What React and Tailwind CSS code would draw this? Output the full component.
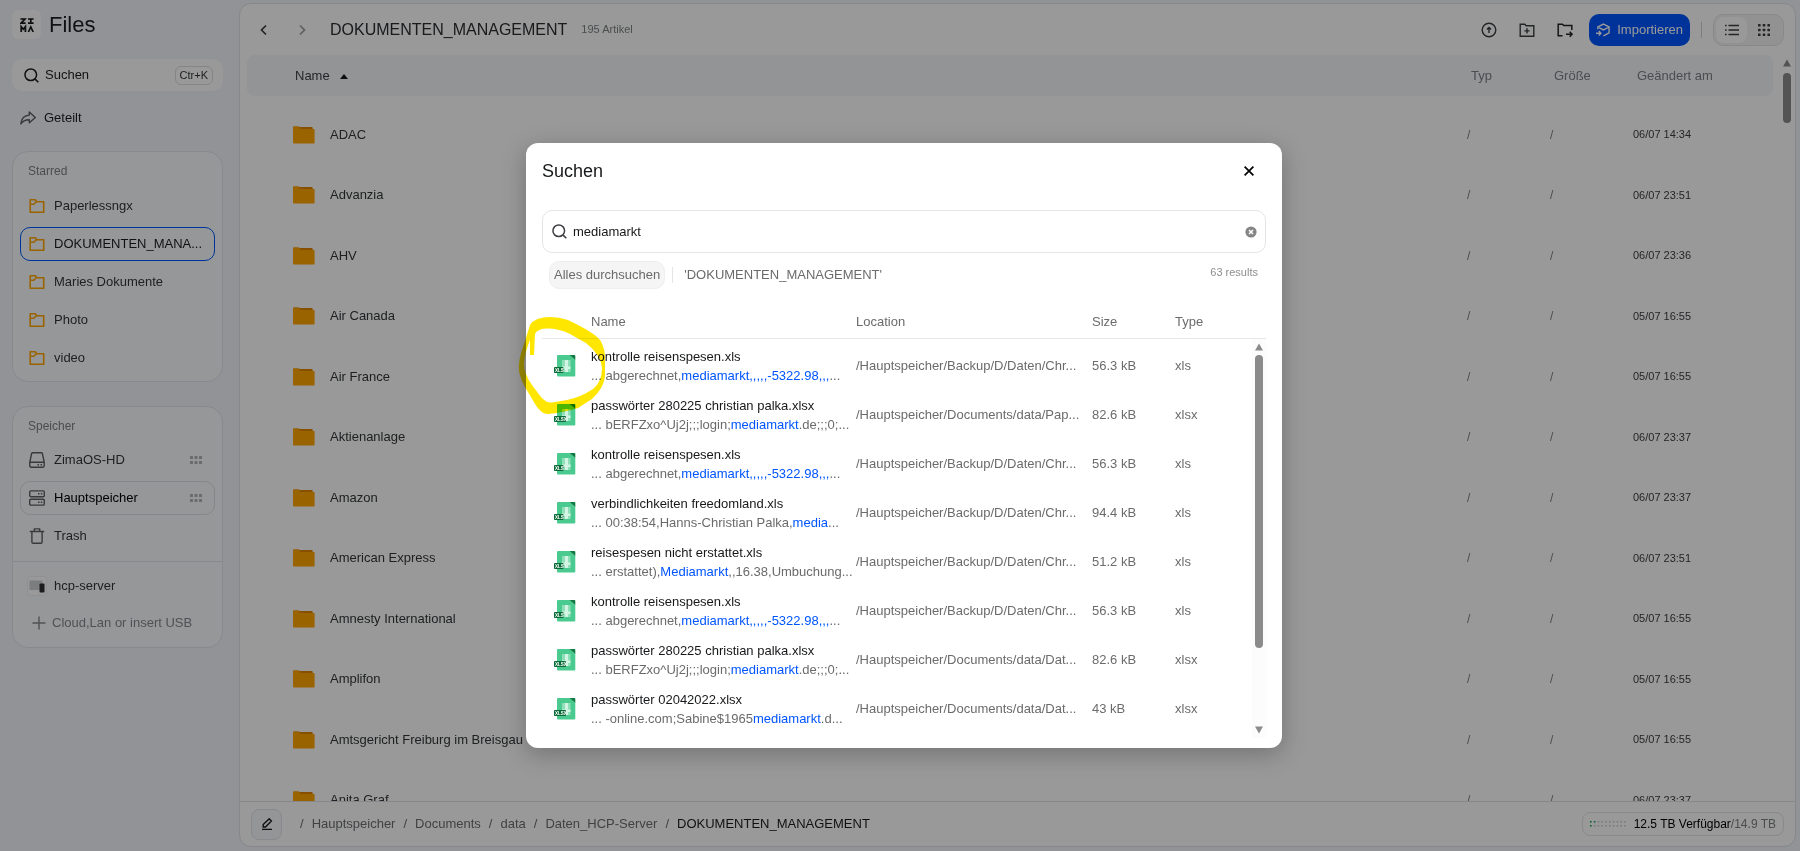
const FOLDERS = [
  ["ADAC", "06/07 14:34"],
  ["Advanzia", "06/07 23:51"],
  ["AHV", "06/07 23:36"],
  ["Air Canada", "05/07 16:55"],
  ["Air France", "05/07 16:55"],
  ["Aktienanlage", "06/07 23:37"],
  ["Amazon", "06/07 23:37"],
  ["American Express", "06/07 23:51"],
  ["Amnesty International", "05/07 16:55"],
  ["Amplifon", "05/07 16:55"],
  ["Amtsgericht Freiburg im Breisgau", "05/07 16:55"],
  ["Anita Graf", "06/07 23:37"],
];

const BACKUP = "/Hauptspeicher/Backup/D/Daten/Chr...";
const RESULTS = [
  { name: "kontrolle reisenspesen.xls", pre: "... abgerechnet,", hit: "mediamarkt,,,,,-5322.98,,,", post: "...", loc: BACKUP, size: "56.3 kB", type: "xls" },
  { name: "passwörter 280225 christian palka.xlsx", pre: "... bERFZxo^Uj2j;;;login;", hit: "mediamarkt", post: ".de;;;0;...", loc: "/Hauptspeicher/Documents/data/Pap...", size: "82.6 kB", type: "xlsx" },
  { name: "kontrolle reisenspesen.xls", pre: "... abgerechnet,", hit: "mediamarkt,,,,,-5322.98,,,", post: "...", loc: BACKUP, size: "56.3 kB", type: "xls" },
  { name: "verbindlichkeiten freedomland.xls", pre: "... 00:38:54,Hanns-Christian Palka,", hit: "media", post: "...", loc: BACKUP, size: "94.4 kB", type: "xls" },
  { name: "reisespesen nicht erstattet.xls", pre: "... erstattet),", hit: "Mediamarkt", post: ",,16.38,Umbuchung...", loc: BACKUP, size: "51.2 kB", type: "xls" },
  { name: "kontrolle reisenspesen.xls", pre: "... abgerechnet,", hit: "mediamarkt,,,,,-5322.98,,,", post: "...", loc: BACKUP, size: "56.3 kB", type: "xls" },
  { name: "passwörter 280225 christian palka.xlsx", pre: "... bERFZxo^Uj2j;;;login;", hit: "mediamarkt", post: ".de;;;0;...", loc: "/Hauptspeicher/Documents/data/Dat...", size: "82.6 kB", type: "xlsx" },
  { name: "passwörter 02042022.xlsx", pre: "... -online.com;Sabine$1965", hit: "mediamarkt", post: ".d...", loc: "/Hauptspeicher/Documents/data/Dat...", size: "43 kB", type: "xlsx" },
];

function SearchIcon({ className }) {
  return (
    <svg className={className} viewBox="0 0 16 16" fill="none" stroke="currentColor" strokeWidth="1.6" aria-hidden="true">
      <circle cx="7.2" cy="7.2" r="6.2" />
      <path d="M11.6 11.6 15.3 15.3" />
    </svg>
  );
}

function FolderOutline() {
  return (
    <svg className="h-4 w-4 shrink-0 text-[#ffa600]" viewBox="0 0 16 16" fill="none" stroke="currentColor" strokeWidth="1.6" strokeLinejoin="round" aria-hidden="true">
      <path d="M1.2 1.8h5.2l1.2 1.9h7.1v10.5H1.2z" />
      <path d="M1.2 6.2h3.6l2.4-2.4" />
    </svg>
  );
}

function FolderSolid() {
  return (
    <svg className="block h-[18px] w-[22px]" viewBox="0 0 22 18" aria-hidden="true">
      <path fill="#e08600" d="M0 1.2Q0 .4.8.4h4.7l1.3.7h12q.9 0 .9.9v3H0z" />
      <path fill="#ffa600" d="M0 1.5Q0 .5 1 .5h4.5L7.5 3.100H21q.6 0 .6.7v13q0 .7-.7.7H.8q-.8 0-.8-.8z" />
    </svg>
  );
}

function Dots() {
  return (
    <svg className="ml-auto h-3 w-3 shrink-0 text-[#b0b2b5]" viewBox="0 0 12 12" fill="currentColor" aria-hidden="true">
      {[2, 7].map((y) => [0, 4.5, 9].map((x) => <rect key={x + "-" + y} x={x} y={y} width="3" height="3" rx=".5" />))}
    </svg>
  );
}

function SheetIcon({ label }) {
  return (
    <svg className="block h-[22px] w-[22px]" viewBox="0 0 22 22" aria-hidden="true">
      <path fill="#4bca8f" d="M4 0h12L21.300 5V20.500q0 1-1 1H4q-1 0-1-1V1q0-1 1-1z" />
      <path fill="#0f7a41" d="M15.500 0h4.800q1 0 1 1v4z" />
      <path fill="#8fdfb9" d="M8 5h8.500v12H8z" />
      <path fill="#d2f4e3" d="M11 5h3v12h-3zM8 11.500h8.500V14H8z" />
      <rect y="12" width={label === "xlsx" ? 12 : 9.5} height="6" rx=".8" fill="#0b6b38" />
      <text x="1" y="16.700" fontSize="4.5" fontWeight="700" fill="#fff" fontFamily="Liberation Sans, sans-serif">
        {label.toUpperCase()}
      </text>
    </svg>
  );
}

function SideItem({ icon, label, active, className = "", dots }) {
  return (
    <a
      href="#"
      aria-current={active ? "page" : undefined}
      className={"flex h-[34px] items-center gap-[9px] rounded-[10px] border pr-3 pl-2 text-[13px] whitespace-nowrap " + (active ? className : "border-transparent text-[#333638]")}
    >
      {icon}
      <span>{label}</span>
      {dots && <Dots />}
    </a>
  );
}

function DriveIcon() {
  return (
    <svg className="h-4 w-4 shrink-0 text-[#5c5f63]" viewBox="0 0 16 16" fill="none" stroke="currentColor" strokeWidth="1.4" strokeLinejoin="round" aria-hidden="true">
      <path d="M3.600.8h8.800q.8 0 1 .8L15.200 10.200v3.600q0 1.400-1.400 1.400H2.200Q.8 15.200.8 13.800v-3.600L2.600 1.600q.2-.8 1-.8zM.8 10.200h14.400" />
      <path d="M8.500 12.700H10M11.500 12.700H13" />
    </svg>
  );
}

function ServerIcon() {
  return (
    <svg className="h-4 w-4 shrink-0 text-[#5c5f63]" viewBox="0 0 16 16" fill="none" stroke="currentColor" strokeWidth="1.4" aria-hidden="true">
      <rect x=".7" y=".9" width="14.600" height="5.800" rx="1.200" />
      <rect x=".7" y="9.300" width="14.600" height="5.800" rx="1.200" />
      <path d="M9 3.800h1.500M11.800 3.800h1.500M9 12.200h1.500M11.800 12.200h1.500" />
    </svg>
  );
}

function TrashIcon() {
  return (
    <svg className="h-4 w-4 shrink-0 text-[#5c5f63]" viewBox="0 0 16 16" fill="none" stroke="currentColor" strokeWidth="1.4" strokeLinejoin="round" aria-hidden="true">
      <path d="M.8 3.500h14.400M5.300 3.500V.9h5.400v2.600M2.900 3.500V14q0 1.200 1.200 1.200h7.800q1.200 0 1.200-1.200V3.500" />
    </svg>
  );
}

function ServerThumb() {
  return (
    <svg className="-mx-0.5 h-5 w-5 shrink-0" viewBox="0 0 20 20" aria-hidden="true">
      <rect x=".5" y=".5" width="19" height="19" rx="3" fill="#fff" stroke="#f0f1f3" />
      <rect x="2.500" y="4.500" width="13" height="9.500" fill="#cfd1d4" />
      <rect x="12.500" y="7.500" width="5" height="9" rx=".8" fill="#2f3032" />
    </svg>
  );
}

function Sidebar() {
  return (
    <aside className="flex w-[239px] shrink-0 flex-col pr-4 pl-3">
      <div className="mt-2.5 flex h-[29px] items-center gap-2">
        <span className="flex h-[29px] w-[29px] items-center justify-center rounded-md bg-white">
          <svg className="h-3.5 w-3.5" viewBox="0 0 14 14" fill="none" stroke="#17181a" strokeWidth="1.7" aria-label="Zima" role="img">
            <path d="M.4 1h4.600L1 5.200h4.600M8 1h5.600M8 5.200h5.600M10.800 1v4.200" />
            <path d="M1.200 14V8.600l2.100 2.600 2.100-2.600V14M8.400 14l2.400-5 2.400 5" />
          </svg>
        </span>
        <h1 className="text-[22px] leading-7 text-[#1c1d1f]">Files</h1>
      </div>
      <button type="button" className="mt-5 flex h-8 items-center rounded-[10px] bg-white pr-2.5 pl-3 text-[13px] text-[#1c1d1f]">
        <SearchIcon className="mr-1.5 h-[15px] w-[15px]" />
        Suchen
        <kbd className="ml-auto rounded-md border border-[#dcdee1] px-1 text-[11px] leading-[17px] text-[#333638] [font-family:'Liberation_Sans',Arial,sans-serif]">Ctr+K</kbd>
      </button>
      <a href="#" className="mt-2.5 flex h-[34px] items-center gap-2 pl-2 text-[13px] text-[#1c1d1f]">
        <svg className="h-4 w-4 text-[#5c5f63]" viewBox="0 0 16 16" fill="none" stroke="currentColor" strokeWidth="1.4" strokeLinejoin="round" aria-hidden="true">
          <path d="M9.300 2 15.300 7.500l-6 5.300V9.700C5.500 9.600 3 10.500.8 14 1.300 9 4 5.400 9.300 5.100z" />
        </svg>
        Geteilt
      </a>

      <nav aria-label="Starred" className="mt-4 flex flex-col gap-1 rounded-2xl border border-[#e2e5ea] bg-[#fbfcfe] px-[7px] pt-[9px] pb-1.5">
        <h2 className="mb-1 pl-2 text-xs leading-5 text-[#7d8084]">Starred</h2>
        <SideItem icon={<FolderOutline />} label="Paperlessngx" />
        <SideItem icon={<FolderOutline />} label="DOKUMENTEN_MANA..." active className="border-[#0055ff] text-[#1c1d1f]" />
        <SideItem icon={<FolderOutline />} label="Maries Dokumente" />
        <SideItem icon={<FolderOutline />} label="Photo" />
        <SideItem icon={<FolderOutline />} label="video" />
      </nav>

      <nav aria-label="Speicher" className="mt-6 rounded-2xl border border-[#e2e5ea] bg-[#fbfcfe]">
        <div className="flex flex-col gap-1 border-b border-[#e2e5ea] px-[7px] pt-[9px] pb-2">
          <h2 className="mb-[3px] pl-2 text-xs leading-5 text-[#7d8084]">Speicher</h2>
          <SideItem icon={<DriveIcon />} label="ZimaOS-HD" dots />
          <SideItem icon={<ServerIcon />} label="Hauptspeicher" dots active className="border-[#dcdfe4] text-black" />
          <SideItem icon={<TrashIcon />} label="Trash" />
        </div>
        <div className="flex flex-col gap-[3px] px-[7px] pt-[7px] pb-[7px]">
          <SideItem icon={<ServerThumb />} label="hcp-server" />
          <button type="button" className="flex h-[34px] items-center gap-1.5 pl-3 text-[13px] whitespace-nowrap text-[#85888c]">
            <svg className="h-3.5 w-3.5" viewBox="0 0 14 14" fill="none" stroke="currentColor" strokeWidth="1.4" aria-hidden="true">
              <path d="M7 .5v13M.5 7h13" />
            </svg>
            Cloud,Lan or insert USB
          </button>
        </div>
      </nav>
    </aside>
  );
}

function Toolbar() {
  return (
    <header className="flex h-[51px] shrink-0 items-center pr-[11px] pl-4 text-[#3c3e41]">
      <button type="button" aria-label="Zurück" className="flex h-4 w-4 items-center justify-center">
        <svg className="h-3 w-3" viewBox="0 0 12 12" fill="none" stroke="currentColor" strokeWidth="1.7"><path d="M8 1.500 3.500 6 8 10.500" /></svg>
      </button>
      <button type="button" aria-label="Vor" className="ml-[22px] flex h-4 w-4 items-center justify-center text-[#9a9c9f]">
        <svg className="h-3 w-3" viewBox="0 0 12 12" fill="none" stroke="currentColor" strokeWidth="1.7"><path d="M4 1.500 8.500 6 4 10.500" /></svg>
      </button>
      <h2 className="ml-5 text-base leading-6 text-[#2b2d30]">DOKUMENTEN_MANAGEMENT</h2>
      <span className="ml-3.5 text-[11px] text-[#7d8084]">195 Artikel</span>
      <div className="ml-auto flex items-center">
        <button type="button" aria-label="Hochladen" className="mr-[22px]">
          <svg className="block h-4 w-4" viewBox="0 0 16 16" fill="none" stroke="currentColor" strokeWidth="1.4">
            <circle cx="8" cy="8" r="6.800" />
            <path d="M8 11V5.600M5.900 7.600 8 5.500l2.100 2.100" />
          </svg>
        </button>
        <button type="button" aria-label="Neuer Ordner" className="mr-[22px]">
          <svg className="block h-4 w-4" viewBox="0 0 16 16" fill="none" stroke="currentColor" strokeWidth="1.4">
            <path d="M1.200 2.200h4.600l1.400 1.600h7.600v10.400H1.200zM8 6.300v5.200M5.400 8.900h5.200" />
          </svg>
        </button>
        <button type="button" aria-label="Ordner verschieben" className="mr-4">
          <svg className="block h-4 w-4" viewBox="0 0 16 16" fill="none" stroke="#232426" strokeWidth="1.5">
            <path d="M5.500 13.800H1.200V2.200h4.200l1.400 1.300h8V8M9 12.200h6M12.700 9.700l2.400 2.500-2.400 2.500" />
          </svg>
        </button>
        <button type="button" className="flex h-8 items-center gap-[7px] rounded-[10px] bg-[#0055ff] px-[7px] text-[13px] font-medium text-white">
          <svg className="h-3.5 w-3.5" viewBox="0 0 14 14" fill="none" stroke="currentColor" strokeWidth="1.400" aria-hidden="true">
            <path d="M1.800 6.200V4L7.400 1.100 13.100 4v5.800L7.400 12.800M3 4.700l4.400 2.200L13.100 4M0 10.200h4.600M2.800 8l2.100 2.200-2.100 2.200" />
          </svg>
          Importieren
        </button>
        <span className="mx-[11px] h-4 w-px bg-[#cfd1d4]" />
        <div className="flex h-8 items-center rounded-[10px] border border-[#e4e5e7] bg-[#f4f4f5] px-0.5">
          <button type="button" aria-label="Liste" aria-pressed="true" className="flex h-[26px] w-[31px] items-center justify-center rounded-lg bg-white">
            <svg className="h-3.5 w-3.5" viewBox="0 0 14 14" fill="none" stroke="currentColor" strokeWidth="1.5"><path d="M3.500 2.500H14M3.500 7H14M3.500 11.500H14M0 2.500h1.600M0 7h1.600M0 11.500h1.600" /></svg>
          </button>
          <button type="button" aria-label="Raster" aria-pressed="false" className="flex h-[26px] w-[34px] items-center justify-center">
            <svg className="h-3 w-3" viewBox="0 0 12 12" fill="currentColor">
              {[0, 4.7, 9.4].map((y) => [0, 4.7, 9.4].map((x) => <rect key={x + "-" + y} x={x} y={y} width="2.600" height="2.600" rx=".6" />))}
            </svg>
          </button>
        </div>
      </div>
    </header>
  );
}

function FileTable() {
  return (
    <div className="flex min-h-0 flex-1 overflow-hidden">
      <div className="min-w-0 flex-1 pl-[7px]">
        <table className="w-full table-fixed border-collapse text-left text-[13px]">
          <colgroup>
            <col className="w-[83px]" />
            <col />
            <col className="w-[83px]" />
            <col className="w-[83px]" />
            <col className="w-[140px]" />
          </colgroup>
          <thead>
            <tr className="h-[41px] text-[#7d8084]">
              <th colSpan={2} aria-sort="ascending" className="rounded-l-lg bg-[#f5f7fb] pl-[48px] font-normal text-[#3c3e41]">
                <span className="flex items-center gap-2.5">
                  Name
                  <svg className="h-2 w-2" viewBox="0 0 8 8" aria-hidden="true"><path d="M4 2 8 7H0z" fill="#17181a" /></svg>
                </span>
              </th>
              <th className="bg-[#f5f7fb] pl-1 font-normal">Typ</th>
              <th className="bg-[#f5f7fb] pl-1 font-normal">Größe</th>
              <th className="rounded-r-lg bg-[#f5f7fb] pl-1 font-normal">Geändert am</th>
            </tr>
          </thead>
          <tbody>
            <tr aria-hidden="true"><td className="h-2" /></tr>
            {FOLDERS.map(([name, date]) => (
              <tr key={name} className="h-[60px] even:h-[61px]">
                <td className="pl-[46px]"><FolderSolid /></td>
                <td className="text-[#333638]">{name}</td>
                <td className="text-xs text-[#7d8084]">/</td>
                <td className="text-xs text-[#7d8084]">/</td>
                <td className="text-[11px] text-[#3c3e41]">{date}</td>
              </tr>
            ))}
          </tbody>
        </table>
      </div>
      <div aria-hidden="true" className="ml-2.5 flex w-3 flex-col items-start pt-1">
        <svg className="h-2 w-2" viewBox="0 0 8 8"><path d="M4 .5 8 7.500H0z" fill="#8b8b8b" /></svg>
        <span className="mt-1.5 h-[50px] w-2 rounded-full bg-[#8b8b8b]" />
      </div>
    </div>
  );
}

function Footer() {
  const crumbs = ["Hauptspeicher", "Documents", "data", "Daten_HCP-Server"];
  return (
    <footer className="flex h-[45px] shrink-0 items-center border-t border-[#dfe2e6] pr-[11px] pl-[11px] text-[13px]">
      <button type="button" aria-label="Pfad bearbeiten" className="flex h-[31px] w-[31px] items-center justify-center rounded-lg border border-[#e2e5ea] bg-[#f7f8fa]">
        <svg className="h-3 w-3" viewBox="0 0 12 12" fill="none" stroke="#17181a" strokeWidth="1.4"><path d="M2.200 9V6.600L8.200.8l2.200 2.200L4.500 9zM1 11.400h10" /></svg>
      </button>
      <nav aria-label="Pfad" className="ml-[18px] flex gap-2 text-[#6b6e72]">
        {crumbs.map((c) => (
          <span key={c} className="flex gap-2"><span>/</span><a href="#">{c}</a></span>
        ))}
        <span>/</span>
        <a href="#" aria-current="page" className="text-[#1c1d1f]">DOKUMENTEN_MANAGEMENT</a>
      </nav>
      <div className="ml-auto flex h-6 items-center rounded-lg border border-[#e2e5ea] px-[7px] text-xs">
        <svg className="mr-2 h-1.5 w-9" viewBox="0 0 36 6" aria-hidden="true">
          {[0, 1, 2, 3, 4, 5, 6, 7, 8, 9].map((i) => (
            <g key={i}>
              <rect x={i * 3.8} y="0" width="1.600" height="1.600" fill={i < 2 ? "#12a150" : "#c9cbce"} />
              <rect x={i * 3.8} y="4" width="1.600" height="1.600" fill={i < 1 ? "#12a150" : "#c9cbce"} />
            </g>
          ))}
        </svg>
        <span className="text-black">12.5 TB Verfügbar</span>
        <span className="text-[#7d8084]">/14.9 TB</span>
      </div>
    </footer>
  );
}

function SearchDialog() {
  return (
    <div role="dialog" aria-modal="true" aria-labelledby="dialog-title" className="relative flex h-[605px] w-[756px] flex-col rounded-xl bg-white px-4 pb-2.5 shadow-[0_6px_24px_rgba(0,0,0,0.25)]">
      <div className="flex h-14 items-center justify-between pr-3">
        <h2 id="dialog-title" className="text-[18px] text-[#17181a]">Suchen</h2>
        <button type="button" aria-label="Schließen">
          <svg className="block h-2.5 w-2.5" viewBox="0 0 10 10" fill="none" stroke="#000" strokeWidth="1.7"><path d="m.6.6 8.800 8.800M9.400.6.600 9.400" /></svg>
        </button>
      </div>
      <div className="mt-[11px] flex h-[43px] shrink-0 items-center rounded-[10px] border border-[#e4e5e7] pr-2 pl-[9px]">
        <SearchIcon className="mr-1.5 h-[15px] w-[15px] text-[#3c3e41]" />
        <input aria-label="Suchen" defaultValue="mediamarkt" className="min-w-0 flex-1 bg-transparent text-[13px] text-[#17181a] outline-none" />
        <button type="button" aria-label="Eingabe löschen">
          <svg className="block h-3 w-3" viewBox="0 0 12 12"><circle cx="6" cy="6" r="5.600" fill="#858585" /><path d="m4 4 4 4M8 4 4 8" stroke="#fff" strokeWidth="1.500" /></svg>
        </button>
      </div>
      <div className="mt-2 flex h-7 shrink-0 items-center pr-2 pl-[7px] text-[13px] text-[#6b6b6b]">
        <button type="button" className="h-7 rounded-[10px] border border-[#efefef] bg-[#f5f5f5] px-1">Alles durchsuchen</button>
        <span className="mx-[7px] h-4 w-px bg-[#e4e5e7]" />
        <button type="button" className="px-1">'DOKUMENTEN_MANAGEMENT'</button>
        <span className="mb-1.5 ml-auto text-[11px] text-[#8e8e8e]">63 results</span>
      </div>
      <div className="relative mt-4 min-h-0 flex-1 overflow-hidden">
        <table className="w-full table-fixed border-collapse text-left text-[13px] whitespace-nowrap text-[#6b6b6b]">
          <colgroup>
            <col className="w-[49px]" />
            <col className="w-[265px]" />
            <col className="w-[236px]" />
            <col className="w-[83px]" />
            <col />
          </colgroup>
          <thead>
            <tr className="h-[33px] border-b border-[#e8e8e8]">
              <th aria-label="Symbol" />
              <th className="font-normal">Name</th>
              <th className="font-normal">Location</th>
              <th className="font-normal">Size</th>
              <th className="font-normal">Type</th>
            </tr>
          </thead>
          <tbody>
            <tr aria-hidden="true"><td className="h-[3px]" /></tr>
            {RESULTS.map((r, i) => (
              <tr key={i} className="h-[49px]">
                <td className="pl-3"><SheetIcon label={r.type} /></td>
                <td className="leading-[19px]">
                  <div className="text-[#17181a]">{r.name}</div>
                  <div>{r.pre}<mark className="bg-transparent text-[#0055ff]">{r.hit}</mark>{r.post}</div>
                </td>
                <td>{r.loc}</td>
                <td>{r.size}</td>
                <td>{r.type}</td>
              </tr>
            ))}
          </tbody>
        </table>
        <div aria-hidden="true" className="absolute top-[34px] right-0 bottom-0 flex w-3.5 flex-col items-center bg-[#fcfcfc] pt-1 pb-1">
          <svg className="h-2 w-2" viewBox="0 0 8 8"><path d="M4 .5 8 7.500H0z" fill="#8b8b8b" /></svg>
          <span className="mt-1 h-[293px] w-2 rounded-full bg-[#8b8b8b]" />
          <svg className="mt-auto h-2 w-2" viewBox="0 0 8 8"><path d="M4 7.500 8 .5H0z" fill="#8b8b8b" /></svg>
        </div>
      </div>
      <svg aria-hidden="true" className="pointer-events-none absolute top-[167px] left-[-16px] h-[110px] w-[110px] mix-blend-multiply" viewBox="0 0 110 110">
        <path fill="#ffe600" d="M20 45 20 30Q15 42 14 53 14 64 22 75L31 87Q36 93 42 92.500L57 90Q71 87 83 79 92 72 92 58 91 45 76 33L60 24Q48 18 36 18.500 27 19 25 24L24 45zM40 7Q25 7 20 15L14 34Q8 49 9 61 11 72 18 82L25 94Q31 104 38 104 52 103 68 98L82 89Q94 78 95 66V46Q94 32 86 26 77 19 58 10 49 7 40 7z" fillRule="evenodd" />
      </svg>
    </div>
  );
}

export default function App() {
  return (
    <div className="relative isolate h-screen bg-[#f2f5fa] [font-family:'Liberation_Sans',Arial,sans-serif]">
      <div className="flex h-full pr-1">
        <Sidebar />
        <main className="mt-[3px] mb-1 flex min-w-0 flex-1 flex-col overflow-hidden rounded-xl border border-[#dfe2e6] bg-white">
          <Toolbar />
          <FileTable />
          <Footer />
        </main>
      </div>
      <div className="absolute inset-0 flex items-center justify-center bg-black/40 pt-10 pl-2">
        <SearchDialog />
      </div>
    </div>
  );
}
